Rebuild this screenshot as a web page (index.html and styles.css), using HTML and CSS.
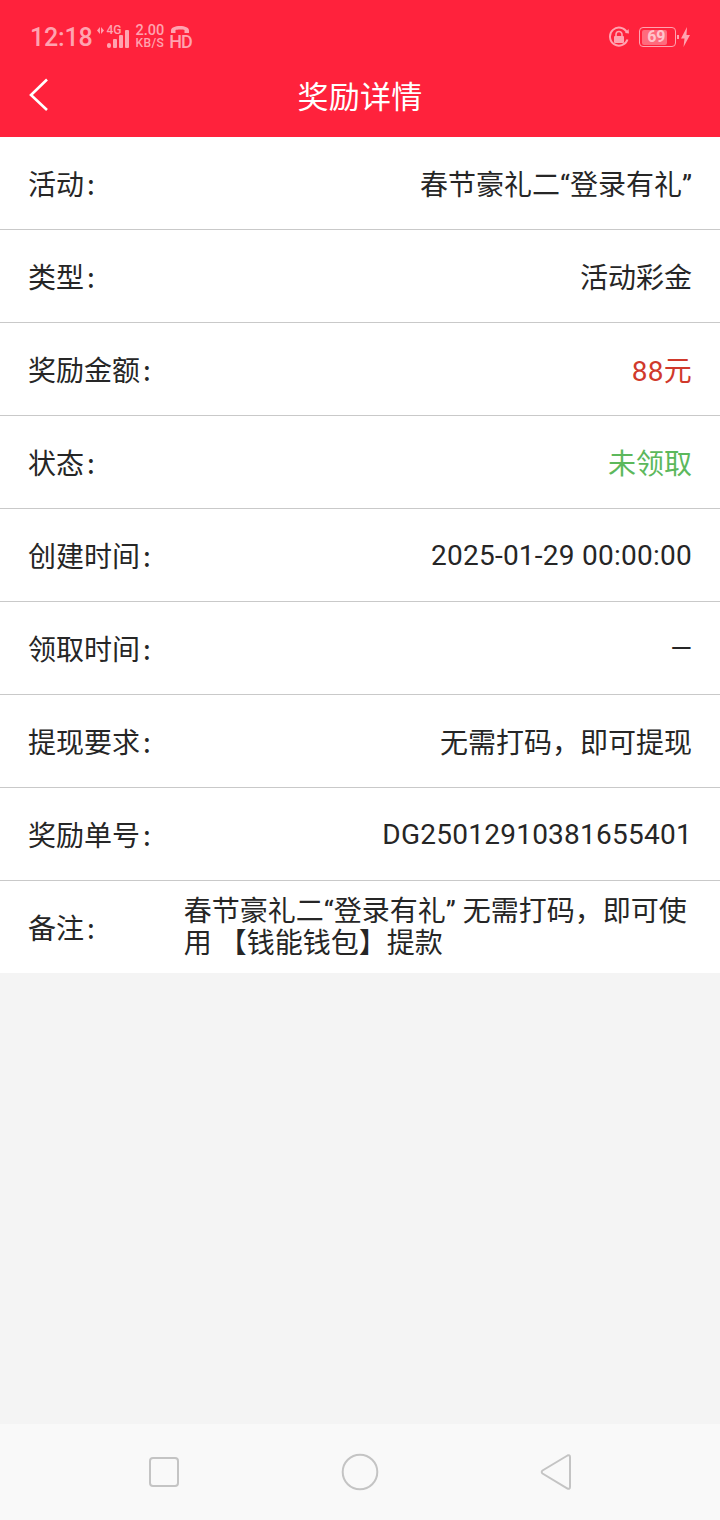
FILE: index.html
```html
<!DOCTYPE html>
<html lang="zh-CN">
<head>
  <meta charset="UTF-8" />
  <meta name="viewport" content="width=device-width, initial-scale=1" />
  <title>奖励详情</title>
  <link rel="stylesheet" href="styles.css">
</head>
<body>
  <div class="header">
    <div class="status-bar">
      <div class="status-left">
        <span class="time">12:18</span>
        <span class="net">
          <svg class="arrows" width="9" height="9" viewBox="0 0 9 9"><path d="M3.800 0V9L0 4.500ZM5.200 0 9 4.500 5.200 9Z" fill="#ffa3b0"/></svg>
          <span class="net-4g">4G</span>
        </span>
        <svg class="signal" width="22" height="19" viewBox="0 0 22 19"><g fill="#ffa3b0"><rect x="0" y="13" width="4" height="5" rx="2"/><rect x="6" y="9" width="4" height="9" rx="1"/><rect x="12" y="5" width="4" height="13" rx="1"/><rect x="18" y="0" width="4" height="18" rx="1"/></g></svg>
        <span class="speed"><b>2.00</b><b class="speed-unit">KB/S</b></span>
        <span class="hd">
          <svg width="20" height="9" viewBox="0 0 20 9"><path d="M1 8V5.500C1 2.500 5 1 10 1S19 2.500 19 5.500V8H14.500V5C13 4.300 7 4.300 5.500 5V8Z" fill="#ffa3b0"/></svg>
          <b>HD</b>
        </span>
      </div>
      <div class="status-right">
        <svg width="22" height="22" viewBox="0 0 22 22"><path d="M19.500 13.500A9 9 0 1 1 19 6.500" fill="none" stroke="#ffa3b0" stroke-width="2"/><path d="M17 7 21 7.500 20.500 3Z" fill="#ffa3b0"/><rect x="6" y="10" width="10" height="7" rx="1" fill="#ffa3b0"/><path d="M8 10V8.500A3 3 0 0 1 14 8.500V10" fill="none" stroke="#ffa3b0" stroke-width="1.600"/></svg>
        <span class="battery"><span class="battery-num">69</span></span>
        <span class="battery-tip"></span>
        <svg width="9" height="20" viewBox="0 0 9 20"><path d="M6 0 0 11.500H3.500L2.500 20 9 8H5.500Z" fill="#ffa3b0"/></svg>
      </div>
    </div>
    <div class="title-bar">
      <svg class="back" width="20" height="34" viewBox="0 0 20 34"><path d="M18 1.500 2 17 18 32" fill="none" stroke="#fff" stroke-width="2.600"/></svg>
      <h1>奖励详情</h1>
    </div>
  </div>

  <div class="list">
    <div class="row"><span class="label">活动<i>:</i></span><span class="value">春节豪礼二“登录有礼”</span></div>
    <div class="row"><span class="label">类型<i>:</i></span><span class="value">活动彩金</span></div>
    <div class="row"><span class="label">奖励金额<i>:</i></span><span class="value red num">88元</span></div>
    <div class="row"><span class="label">状态<i>:</i></span><span class="value green">未领取</span></div>
    <div class="row"><span class="label">创建时间<i>:</i></span><span class="value num">2025-01-29 00:00:00</span></div>
    <div class="row"><span class="label">领取时间<i>:</i></span><span class="value">—</span></div>
    <div class="row"><span class="label">提现要求<i>:</i></span><span class="value">无需打码，即可提现</span></div>
    <div class="row"><span class="label">奖励单号<i>:</i></span><span class="value num">DG25012910381655401</span></div>
    <div class="row row-note"><span class="label">备注<i>:</i></span><span class="note">春节豪礼二“登录有礼” 无需打码，即可使用 【钱能钱包】提款</span></div>
  </div>

  <div class="spacer"></div>

  <div class="nav-bar">
    <svg width="32" height="32" viewBox="0 0 32 32"><rect x="2" y="2" width="28" height="28" rx="3" fill="none" stroke="#c4c4c4" stroke-width="2"/></svg>
    <svg width="38" height="38" viewBox="0 0 38 38"><circle cx="19" cy="19" r="17.300" fill="none" stroke="#c4c4c4" stroke-width="2"/></svg>
    <svg width="32" height="36" viewBox="0 0 32 36"><path d="M2.500 16.500 27.500 1.500C29 .7 30 1.500 30 3V33C30 34.500 29 35.200 27.500 34.500L2.500 19.500C1.500 18.800 1.500 17.200 2.500 16.500Z" fill="none" stroke="#c4c4c4" stroke-width="2"/></svg>
  </div>
</body>
</html>
```

FILE: styles.css
```css
* {
  box-sizing: border-box;
}
body {
  margin: 0;
  width: 720px;
  height: 1520px;
  display: flex;
  flex-direction: column;
  background: #f4f4f4;
  font-family: "Noto Sans CJK SC", Roboto, sans-serif;
  color: #262626;
}
.header {
  background: #ff223c;
  height: 137px;
}
.status-bar {
  height: 56px;
  padding: 18px 30px 0 30px;
  display: flex;
  justify-content: space-between;
  align-items: flex-start;
  color: #ffa3b0;
  font-family: Roboto, sans-serif;
}
.status-left {
  display: flex;
  align-items: center;
  height: 38px;
}
.time {
  font-size: 25px;
  font-weight: 500;
  letter-spacing: -.2px;
}
.net {
  display: flex;
  align-items: center;
  gap: 2px;
  margin-left: 5px;
  margin-bottom: 14px;
  width: 24px;
  margin-right: -13px;
}
.net-4g {
  font-size: 12px;
  line-height: 12px;
  font-weight: 500;
}
.signal {
  margin-top: 4px;
  margin-left: -1px;
}
.speed {
  display: flex;
  flex-direction: column;
  margin-left: 6px;
  font-size: 14.500px;
  line-height: 13px;
}
.speed b {
  font-weight: 500;
}
.speed .speed-unit {
  font-size: 12px;
  letter-spacing: .4px;
}
.hd {
  display: flex;
  flex-direction: column;
  align-items: center;
  margin-left: 5px;
  font-size: 18px;
  line-height: 15px;
  letter-spacing: -1px;
}
.hd b {
  font-weight: 500;
}
.status-right {
  display: flex;
  align-items: center;
  height: 38px;
}
.battery {
  width: 37px;
  height: 20px;
  margin-left: 9px;
  border: 1.500px solid #ffa3b0;
  border-radius: 4px;
  padding: 1.500px;
  display: flex;
}
.battery-num {
  width: 25px;
  padding-right: 1px;
  background: #ff6b7d;
  color: #ffc4cc;
  font-size: 16px;
  font-weight: 700;
  line-height: 14px;
  text-align: right;
  border-radius: 2px;
}
.battery-tip {
  width: 2px;
  height: 4px;
  margin: 0 2px 0 1px;
  background: #ffa3b0;
}
.title-bar {
  height: 81px;
  position: relative;
  display: flex;
  align-items: center;
  justify-content: center;
  padding-bottom: 5px;
}
.back {
  position: absolute;
  left: 29px;
  top: 22px;
}
h1 {
  margin: 0;
  font-size: 31px;
  letter-spacing: .3px;
  font-weight: 400;
  color: #fff;
}
.list {
  background: #fff;
}
.row {
  height: 93px;
  padding: 0 28px;
  border-bottom: 1px solid #c9c9c9;
  display: flex;
  align-items: center;
  justify-content: space-between;
  font-size: 28px;
}
.label {
  flex-shrink: 0;
}
.label i {
  font-style: normal;
  margin-left: 3px;
}
.value {
  font-family: Roboto, "Noto Sans CJK SC", sans-serif;
  text-align: right;
}
.num {
  letter-spacing: .25px;
}
.red {
  color: #d0392b;
}
.green {
  color: #5cb85c;
}
.row-note {
  height: 92px;
  border-bottom: none;
  justify-content: flex-start;
}
.note {
  width: 508px;
  margin-left: 89px;
  padding-top: 2px;
  line-height: 32px;
  font-family: Roboto, "Noto Sans CJK SC", sans-serif;
}
.spacer {
  flex: 1;
}
.nav-bar {
  height: 96px;
  background: #f9f9f9;
  padding: 0 148px;
  display: flex;
  justify-content: space-between;
  align-items: center;
}
```
